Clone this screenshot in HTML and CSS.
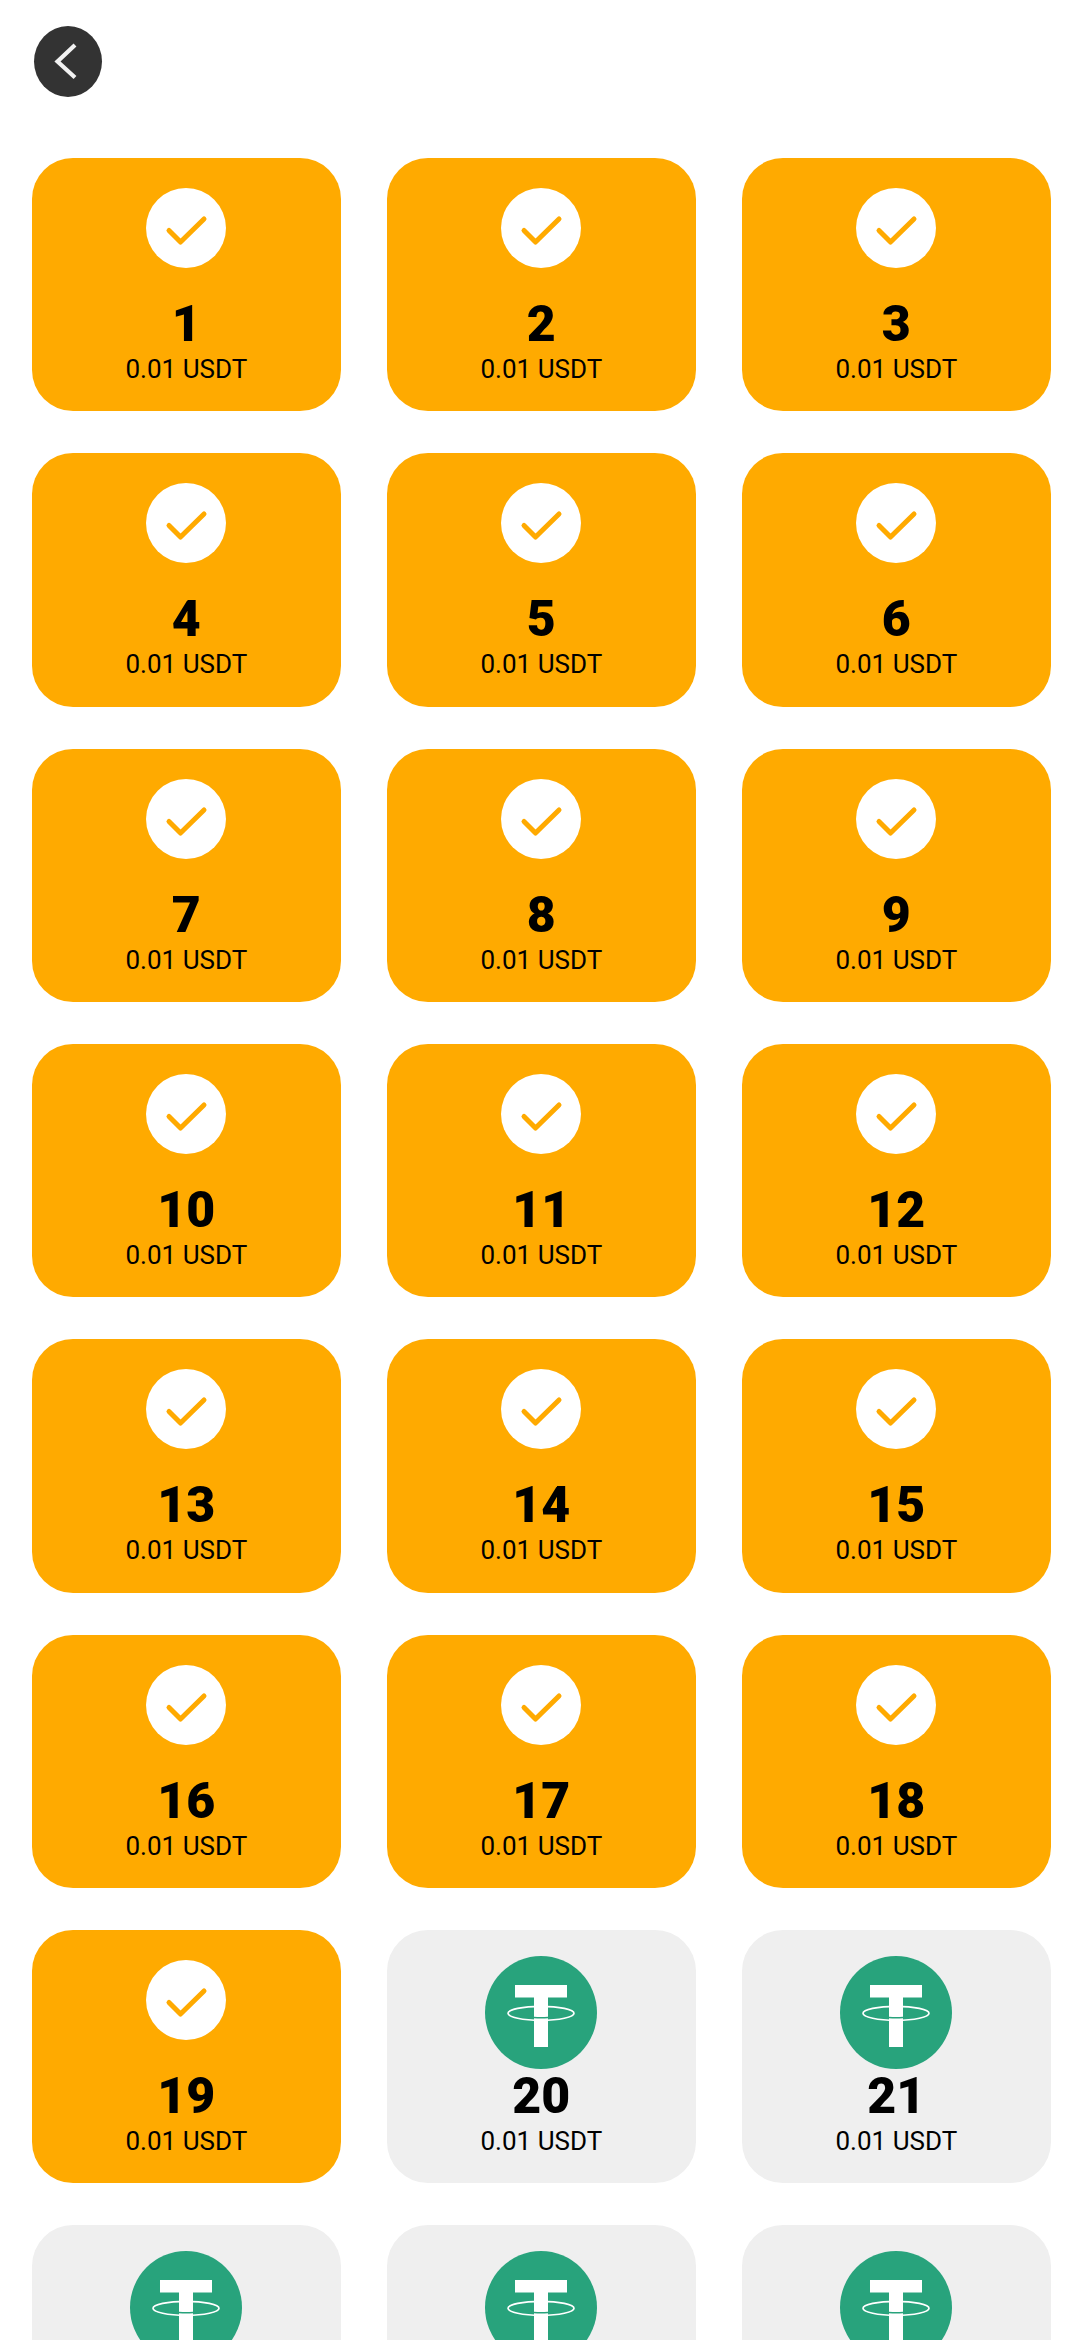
FILE: index.html
```html
<!DOCTYPE html>
<html lang="en">
<head>
    <meta charset="UTF-8">
    <meta name="viewport" content="width=device-width, initial-scale=1.0">
    <title>Daily Rewards</title>
    <link rel="stylesheet" href="styles.css">
</head>
<body>
    <!-- Shared icons, reused by every card -->
    <svg class="icon-defs" aria-hidden="true">
        <symbol id="icon-check" viewBox="0 0 80 80">
            <circle cx="40" cy="40" r="40" fill="#fff"/>
            <path d="M23 42.5L34.5 54L58 31" fill="none" stroke="#ffaa00" stroke-width="5" stroke-linecap="round" stroke-linejoin="round"/>
        </symbol>
        <symbol id="icon-tether" viewBox="0 0 112 113">
            <ellipse cx="56" cy="56.5" rx="56" ry="56.5" fill="#28a37c"/>
            <path d="M30 29H82V41.5H63V91H49V41.5H30Z" fill="#fff"/>
            <ellipse cx="56" cy="57.3" rx="33" ry="7" fill="none" stroke="#fff" stroke-width="1.7"/>
            <path d="M49 61.5Q56 62 63 61.5" fill="none" stroke="#28a37c" stroke-width="1.4"/>
        </symbol>
    </svg>

    <div class="page">
        <!-- Back button -->
        <header class="top-bar">
            <a class="back-btn" href="#" aria-label="Back">
                <svg width="68" height="71" viewBox="0 0 68 71">
                    <path d="M41 19L23.5 35.5L41 51.5" fill="none" stroke="#f2f2f2" stroke-width="4.2"/>
                </svg>
            </a>
        </header>

        <!-- Reward cards -->
        <main class="card-grid">
            <div class="card done"><svg class="icon-done"><use href="#icon-check"/></svg><div class="day">1</div><div class="amount">0.01 USDT</div></div>
            <div class="card done"><svg class="icon-done"><use href="#icon-check"/></svg><div class="day">2</div><div class="amount">0.01 USDT</div></div>
            <div class="card done"><svg class="icon-done"><use href="#icon-check"/></svg><div class="day">3</div><div class="amount">0.01 USDT</div></div>
            <div class="card done"><svg class="icon-done"><use href="#icon-check"/></svg><div class="day">4</div><div class="amount">0.01 USDT</div></div>
            <div class="card done"><svg class="icon-done"><use href="#icon-check"/></svg><div class="day">5</div><div class="amount">0.01 USDT</div></div>
            <div class="card done"><svg class="icon-done"><use href="#icon-check"/></svg><div class="day">6</div><div class="amount">0.01 USDT</div></div>
            <div class="card done"><svg class="icon-done"><use href="#icon-check"/></svg><div class="day">7</div><div class="amount">0.01 USDT</div></div>
            <div class="card done"><svg class="icon-done"><use href="#icon-check"/></svg><div class="day">8</div><div class="amount">0.01 USDT</div></div>
            <div class="card done"><svg class="icon-done"><use href="#icon-check"/></svg><div class="day">9</div><div class="amount">0.01 USDT</div></div>
            <div class="card done"><svg class="icon-done"><use href="#icon-check"/></svg><div class="day">10</div><div class="amount">0.01 USDT</div></div>
            <div class="card done"><svg class="icon-done"><use href="#icon-check"/></svg><div class="day">11</div><div class="amount">0.01 USDT</div></div>
            <div class="card done"><svg class="icon-done"><use href="#icon-check"/></svg><div class="day">12</div><div class="amount">0.01 USDT</div></div>
            <div class="card done"><svg class="icon-done"><use href="#icon-check"/></svg><div class="day">13</div><div class="amount">0.01 USDT</div></div>
            <div class="card done"><svg class="icon-done"><use href="#icon-check"/></svg><div class="day">14</div><div class="amount">0.01 USDT</div></div>
            <div class="card done"><svg class="icon-done"><use href="#icon-check"/></svg><div class="day">15</div><div class="amount">0.01 USDT</div></div>
            <div class="card done"><svg class="icon-done"><use href="#icon-check"/></svg><div class="day">16</div><div class="amount">0.01 USDT</div></div>
            <div class="card done"><svg class="icon-done"><use href="#icon-check"/></svg><div class="day">17</div><div class="amount">0.01 USDT</div></div>
            <div class="card done"><svg class="icon-done"><use href="#icon-check"/></svg><div class="day">18</div><div class="amount">0.01 USDT</div></div>
            <div class="card done"><svg class="icon-done"><use href="#icon-check"/></svg><div class="day">19</div><div class="amount">0.01 USDT</div></div>
            <div class="card"><svg class="icon-coin"><use href="#icon-tether"/></svg><div class="day">20</div><div class="amount">0.01 USDT</div></div>
            <div class="card"><svg class="icon-coin"><use href="#icon-tether"/></svg><div class="day">21</div><div class="amount">0.01 USDT</div></div>
            <!-- Last row: only the top of these cards is in the window -->
            <div class="card"><svg class="icon-coin"><use href="#icon-tether"/></svg></div>
            <div class="card"><svg class="icon-coin"><use href="#icon-tether"/></svg></div>
            <div class="card"><svg class="icon-coin"><use href="#icon-tether"/></svg></div>
        </main>
    </div>
</body>
</html>
```

FILE: styles.css
```css
/* Page basics */
html, body {
    margin: 0;
    background-color: #fff;
}

body {
    font-family: Roboto, sans-serif;
    color: #000;
}

/* The window shows only the first 2340px */
.page {
    height: 100vh;
    overflow: hidden;
}

.icon-defs {
    display: none;
}

/* Back button */
.top-bar {
    display: flex;
    padding: 26px 34px 61px;
}

.back-btn {
    display: block;
    width: 68px;
    height: 71px;
    border-radius: 50%;
    background-color: #333;
}

.back-btn svg {
    display: block;
}

/* Three columns of cards */
.card-grid {
    display: grid;
    grid-template-columns: repeat(3, 1fr);
    column-gap: 46.33px;
    row-gap: 42px;
    padding: 0 29.33px 0 32px;
}

.card {
    display: flex;
    flex-direction: column;
    align-items: center;
    box-sizing: border-box;
    height: 253.33px;
    padding-top: 26px;
    border-radius: 41px;
    background-color: #efefef;
}

.card.done {
    background-color: #ffaa00;
}

/* Icons: the check is smaller, so its margins fill the same space as the coin */
.icon-done {
    width: 80px;
    height: 80px;
    margin: 4px 0 29px;
}

.icon-coin {
    width: 112px;
    height: 113px;
}

.day {
    margin-top: 2px;
    font-size: 50px;
    font-weight: 900;
    line-height: 50px;
}

.amount {
    margin-top: 5px;
    font-size: 26px;
    line-height: 30px;
}
```
